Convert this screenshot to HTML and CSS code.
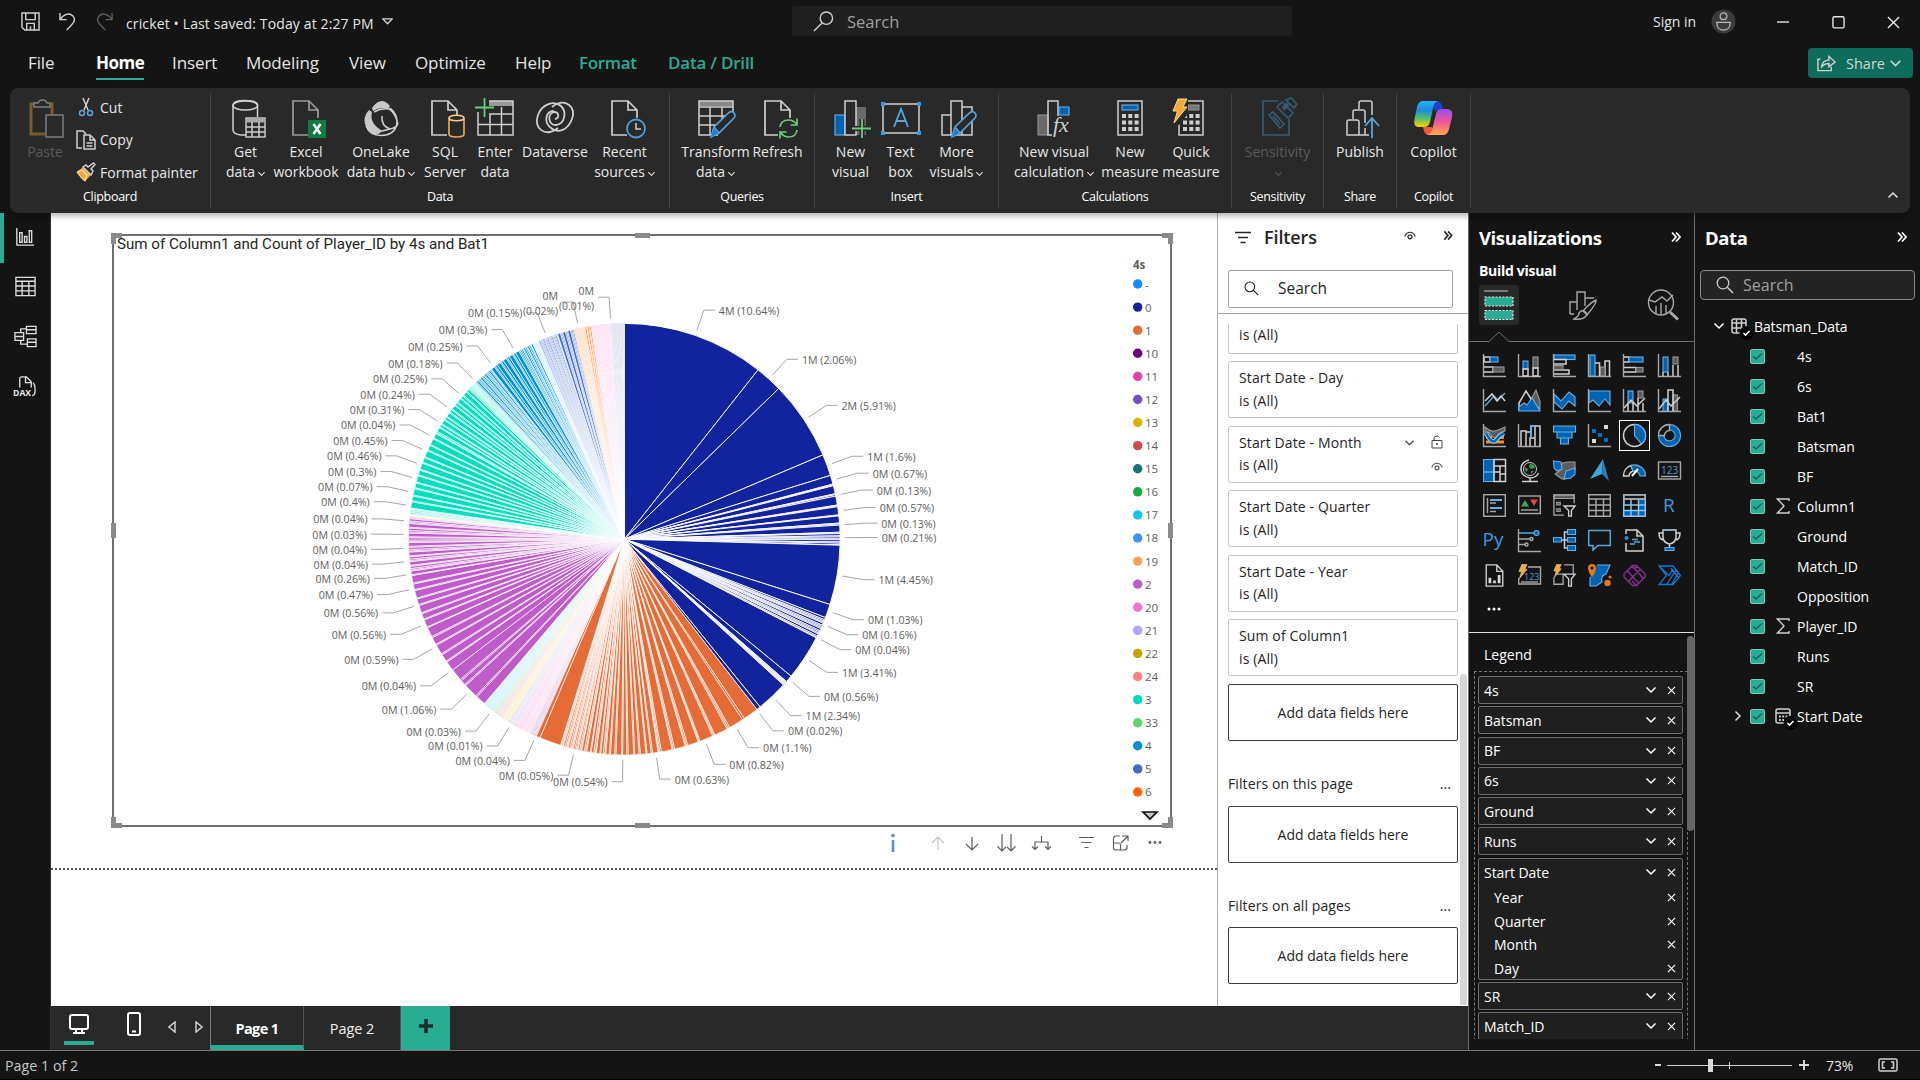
FILE: index.html
```html
<!DOCTYPE html>
<html lang="en">
<head>
<meta charset="utf-8">
<title>cricket - Power BI Desktop</title>
<link rel="stylesheet" href="styles.css">
</head>
<body>
<svg class="defs" width="0" height="0">
  <symbol id="chev" viewBox="0 0 12 8"><path d="M1.5 1.5 6 6 10.500 1.500" fill="none" stroke="currentColor" stroke-width="1.500"/></symbol>
  <symbol id="cross" viewBox="0 0 10 10"><path d="M1 1 9 9M9 1 1 9" stroke="currentColor" stroke-width="1.300"/></symbol>
  <symbol id="dbl" viewBox="0 0 10 12"><path d="M1 1.500 5 6 1 10.500M5 1.500 9 6 5 10.500" fill="none" stroke="currentColor" stroke-width="1.700"/></symbol>
  <symbol id="check" viewBox="0 0 15 15"><rect x=".5" y=".5" width="14" height="14" rx="1.500" fill="#2aac94" stroke="#7cc9bb"/><path d="M3 7.500 6 10 12 4.500" fill="none" stroke="#12594c" stroke-width="1.200"/></symbol>
  <symbol id="sigma" viewBox="0 0 14 16"><path d="M13 3V1H1.500L8 8 1.500 15H13V13" fill="none" stroke="#d0d0d0" stroke-width="1.400"/></symbol>
  <symbol id="lens" viewBox="0 0 18 18"><circle cx="7" cy="7" r="5.800" fill="none" stroke="currentColor" stroke-width="1.300"/><path d="M11.300 11.300 17 17" stroke="currentColor" stroke-width="1.500"/></symbol>
  <symbol id="eye" viewBox="0 0 12 9"><path d="M.7 5.500C2 2.300 4 1.200 6 1.200S10 2.300 11.300 5.500" fill="none" stroke="currentColor" stroke-width="1.100"/><circle cx="6" cy="5.800" r="2" fill="none" stroke="currentColor" stroke-width="1.200"/></symbol>
  <symbol id="page" viewBox="0 0 40 40"><path d="M22 37H7V3H23L32 12V20M23 3V12H32" fill="none" stroke="currentColor" stroke-width="1.700"/></symbol>
  <symbol id="pencil" viewBox="0 0 26 28"><path d="M1 27 4 17 19 2.500Q22 .5 24 3T24 8L9 23ZM4 17 9 23" fill="#292929" stroke="#58a6df" stroke-width="1.600"/><path d="M1 27 4 18 8.500 23Z" fill="#1b7fd0"/></symbol>
  <symbol id="bolt" viewBox="0 0 16 26"><path d="M6 1H15L11 9H15L2 25 5.500 13H1Z" fill="#f2a83c" stroke="#ffdc8a"/></symbol>
  <linearGradient id="cp1" x1="0" y1="0" x2="0" y2="1"><stop offset="0" stop-color="#22b3f5"/><stop offset=".35" stop-color="#1e8ae0"/><stop offset=".65" stop-color="#4cc06a"/><stop offset="1" stop-color="#fbd300"/></linearGradient>
  <linearGradient id="cp2" x1="0" y1="0" x2="0" y2="1"><stop offset="0" stop-color="#9a4df0"/><stop offset=".5" stop-color="#f0559a"/><stop offset="1" stop-color="#ffab4a"/></linearGradient>
</svg>

<header class="titlebar">
  <div class="quick">
    <svg class="q-save" viewBox="0 0 20 20"><path d="M1 1H19V19H4L1 16ZM5 1V8H15V1M6 19V12H14V19M10 15V19" class="ln"/></svg>
    <svg class="q-undo" viewBox="0 0 18 20"><path d="M1 1V8H8M1 8C5 2 11 .5 14.500 4S17 11 8 19" class="ln"/></svg>
    <svg class="q-undo dim" viewBox="0 0 18 20"><path d="M17 1V8H10M17 8C13 2 7 .5 3.500 4S1 11 10 19" class="ln"/></svg>
    <span class="doc">cricket • Last saved: Today at 2:27 PM</span>
    <svg class="q-tri" viewBox="0 0 12 7"><path d="M1 .7H11L6 6Z" class="ln"/></svg>
  </div>
  <div class="topsearch">
    <svg viewBox="0 0 22 22"><circle cx="14" cy="7.500" r="6.500" class="ln"/><path d="M9.500 12.500 1 21" class="ln"/></svg>
    <span>Search</span>
  </div>
  <div class="account">
    <span>Sign in</span>
    <svg class="avatar" viewBox="0 0 26 26"><circle cx="13" cy="13" r="12.500" fill="#3b3b3b"/><circle cx="13" cy="7.500" r="3.500" fill="none" stroke="#bbb" stroke-width="1.300"/><path d="M6 14H20C20 19 17 22 13 22S6 19 6 14Z" fill="none" stroke="#bbb" stroke-width="1.300"/></svg>
  </div>
  <div class="winbtns">
    <svg viewBox="0 0 14 14"><path d="M0 6.500H13" class="wn"/></svg>
    <svg viewBox="0 0 14 14"><rect x="1" y=".8" width="12" height="12" rx="1.500" class="wn"/></svg>
    <svg viewBox="0 0 14 14"><path d="M1 1 13 13M13 1 1 13" class="wn"/></svg>
  </div>
</header>

<nav class="menubar">
  <a class="m1">File</a><a class="m2 active">Home</a><a class="m3">Insert</a><a class="m4">Modeling</a><a class="m5">View</a><a class="m6">Optimize</a><a class="m7">Help</a><a class="m8 ctx">Format</a><a class="m9 ctx">Data / Drill</a>
  <div class="share">
    <svg class="sh" viewBox="0 0 20 18"><path d="M3.500 5H1V17H15V13M5 13C5.500 8 8 6 12.500 6V2L19 8 12.500 13V9.500C9 9.500 7 10.500 5 13Z" class="ln"/></svg>
    <span>Share</span>
    <svg class="sc"><use href="#chev"/></svg>
  </div>
</nav>

<section class="ribbon">
  <div class="group g-clip">
    <div class="tools">
      <div class="btn w-paste off"><svg class="ic" viewBox="0 0 40 40"><path d="M13 6H6V36H20M27 20V6H21" fill="none" stroke="#7b5a2c" stroke-width="3"/><path d="M9 9V5H13Q14 2 17.500 2T22 5H25V9Z" fill="#292929" stroke="#7d7d7d" stroke-width="1.500"/><rect x="21" y="17" width="17" height="22" fill="#292929" stroke="#7d7d7d" stroke-width="1.500"/></svg><span>Paste</span></div>
      <div class="stack">
        <div><svg viewBox="0 0 20 20"><path d="M7 1 12 13M13 1 8 13" class="ln"/><circle cx="6" cy="16" r="2.500" class="bl"/><circle cx="14" cy="16" r="2.500" class="bl"/></svg>Cut</div>
        <div><svg viewBox="0 0 20 20"><path d="M6 18H1V1H7L10 4M8 5H14L19 10V19H8ZM14 5V10H19M10.500 13H16.500M10.500 16H16.500" class="ln"/></svg>Copy</div>
        <div><svg viewBox="0 0 20 20"><path d="M1 10 7 5 15 13 9 19Z" fill="#f2a83c"/><path d="M1 10 6 8 11 13 9 19M1 10Q5 16 9 19" fill="none" stroke="#ffe09a" stroke-width="1.200"/><path d="M7 5 15 13 17 9 15 7 19 2.500 17.500 1 12 5 10 3Z" class="ln"/></svg>Format painter</div>
      </div>
    </div>
    <div class="gl">Clipboard</div>
  </div>
  <div class="group g-data">
    <div class="tools">
      <div class="btn w49"><svg class="ic" viewBox="0 0 40 40"><path d="M20 37H15Q7 36 7 32V7Q7 2.500 19 2.500T31.500 7V19" class="ln"/><ellipse cx="19.300" cy="7.500" rx="12.300" ry="4.500" class="ln"/><rect x="20" y="20" width="19" height="19" fill="#292929" stroke="#d0d0d0" stroke-width="1.400"/><path d="M20 22.500H39" stroke="#aaa" stroke-width="4"/><path d="M20 29H39M20 34H39M26 24V39M33 24V39" class="ln"/></svg><span>Get<br>data<i class="cv"></i></span></div>
      <div class="btn w72"><svg class="ic" viewBox="0 0 40 40"><use href="#page" color="#9b9b9b"/><rect x="22" y="22" width="18" height="18" fill="#107c41"/><path d="M27.500 26 34.500 36M34.500 26 27.500 36" stroke="#fff" stroke-width="2.400"/></svg><span>Excel<br>workbook</span></div>
      <div class="btn w78"><svg class="ic" viewBox="0 0 40 40"><path d="M11 10Q20-3 29 8L27 11Q20 8 12 13ZM8 12Q-1 22 8 33L14 37Q18 36 22 33 8 26 11 14Z" fill="#c8c8c8"/><path d="M29 10C40 18 39 37 20 37.500 12 37.500 7 33 5 28M13 14Q20 10 28 11 34 14 37 26M21 18Q20 28 29 31 36 30 37 25M21 33 29 31" class="ln"/></svg><span>OneLake<br>data hub<i class="cv"></i></span></div>
      <div class="btn w50"><svg class="ic" viewBox="0 0 40 40"><use href="#page" color="#cfcfcf"/><path d="M24 20V36Q24 39 31.500 39T39 36V20" fill="#292929" stroke="#e8a55a" stroke-width="1.700"/><ellipse cx="31.500" cy="20" rx="7.500" ry="2.800" fill="#292929" stroke="#ffc98a" stroke-width="1.500"/></svg><span>SQL<br>Server</span></div>
      <div class="btn w50"><svg class="ic" viewBox="0 0 40 40"><path d="M14 5.500H38" stroke="#999" stroke-width="5"/><path d="M3 14V37H38V3H14M3 26.500H38M14 16H38M15 16V37M26.500 9V37" class="ln"/><path d="M9.500 0V19M0 9.500H19" stroke="#6ccb7c" stroke-width="1.800"/></svg><span>Enter<br>data</span></div>
      <div class="btn w70"><svg class="ic" viewBox="0 0 40 40"><g fill="none" stroke="#cfcfcf" stroke-width="1.800"><path d="M23 30C10 40-2 30 3 17 7 6 19 2 26 8 32 14 30 26 21 27 13 27 12 16 19 14 24 14 25 20 20 21"/><path d="M17 9C30-1 42 9 37 21 33 32 23 36 16 30 8 24 11 13 19 13"/></g></svg><span>Dataverse</span></div>
      <div class="btn w69"><svg class="ic" viewBox="0 0 40 40"><use href="#page" color="#cfcfcf"/><circle cx="31" cy="30.500" r="9" fill="#292929" stroke="#4f9fdc" stroke-width="1.800"/><path d="M31 25V31H36" class="ln"/></svg><span>Recent<br>sources<i class="cv"></i></span></div>
    </div>
    <div class="gl">Data</div>
  </div>
  <div class="group g-query">
    <div class="tools">
      <div class="btn w71"><svg class="ic" viewBox="0 0 40 40"><path d="M3 5.500H37" stroke="#888" stroke-width="5"/><path d="M22 37H3V3H37V15M3 9H37M3 18H33M3 27H22M14 9V37M26 9V24" class="ln"/><use href="#pencil" x="14" y="12" width="26" height="28"/></svg><span>Transform<br>data<i class="cv"></i></span></div>
      <div class="btn w53"><svg class="ic" viewBox="0 0 40 40"><use href="#page" color="#cfcfcf"/><path d="M22 20H40V40H20V22Z" fill="#292929"/><path d="M22 29Q23 22 30.500 22 35 22 38.500 26M39 20.500V27H32.500M39 32Q38 39 30.500 39 26 39 23 35M22 40.500V34H28.500" fill="none" stroke="#6ccb7c" stroke-width="1.700"/></svg><span>Refresh</span></div>
    </div>
    <div class="gl">Queries</div>
  </div>
  <div class="group g-ins">
    <div class="tools">
      <div class="btn w53"><svg class="ic" viewBox="0 0 40 40"><rect x="4" y="17" width="10" height="20" class="fb"/><rect x="25" y="9" width="10" height="28" fill="#6a6a6a"/><rect x="14" y="3" width="11" height="34" fill="#292929" class="ln"/><path d="M31 21V40M21 30.500H40" stroke="#292929" stroke-width="5"/><path d="M31 21V40M21 30.500H40" stroke="#6ccb7c" stroke-width="1.800"/></svg><span>New<br>visual</span></div>
      <div class="btn w47"><svg class="ic" viewBox="0 0 40 40"><rect x="2" y="6" width="36" height="29" class="ln"/><path d="M0 4H4V8H0ZM36 4H40V8H36ZM0 33H4V37H0ZM36 33H40V37H36Z" fill="#3b9ae1"/><path d="M13 29 20 11 27 29M15.500 23H24.500" fill="none" stroke="#58a6df" stroke-width="1.800"/></svg><span>Text<br>box</span></div>
      <div class="btn w65"><svg class="ic" viewBox="0 0 40 40"><path d="M5 17H14V37H5ZM14 37V3H25V37ZM25 9H35V37H25" class="ln"/><use href="#pencil" x="14" y="12" width="26" height="28"/></svg><span>More<br>visuals<i class="cv"></i></span></div>
    </div>
    <div class="gl">Insert</div>
  </div>
  <div class="group g-calc">
    <div class="tools">
      <div class="btn w90"><svg class="ic" viewBox="0 0 40 40"><rect x="4" y="17" width="10" height="20" fill="#6a6a6a" stroke="#999"/><path d="M24 18V3H14V37H18" class="ln"/><path d="M25 9H35V17H25Z" class="fb"/><text x="19" y="34" class="fx">fx</text></svg><span>New visual<br>calculation<i class="cv"></i></span></div>
      <div class="btn w62"><svg class="ic" viewBox="0 0 40 40"><rect x="8" y="3" width="24" height="34" class="ln"/><rect x="12" y="7" width="16" height="5" class="fb"/><path d="M12 18H29M12 24.500H29M12 31H29" stroke="#cfcfcf" stroke-width="4" stroke-dasharray="4 2.300"/></svg><span>New<br>measure</span></div>
      <div class="btn w60"><svg class="ic" viewBox="0 0 40 40"><rect x="8" y="3" width="24" height="34" class="ln"/><rect x="17" y="7" width="11" height="5" fill="#777" stroke="#999"/><path d="M12 18H29M12 24.500H29M12 31H29" stroke="#cfcfcf" stroke-width="4" stroke-dasharray="4 2.300"/><path d="M4 0H17V16L8 27H3Z" fill="#292929"/><use href="#bolt" x="1" y="0" width="16" height="26"/></svg><span>Quick<br>measure</span></div>
    </div>
    <div class="gl">Calculations</div>
  </div>
  <div class="group g-sens">
    <div class="tools">
      <div class="btn off"><svg class="ic" viewBox="0 0 40 40"><g fill="none" stroke="#355a74" stroke-width="1.700"><path d="M21 3H6V37H32V21M12 17 16 14 27 26 23 30ZM16 18 23 26"/><path d="M20 9 25 4 36 15 31 20ZM29 2 34 0 40 6 37 10Z"/><path d="M26 11 31 6" stroke-width="4"/></g></svg><span>Sensitivity<br><i class="cv"></i></span></div>
    </div>
    <div class="gl">Sensitivity</div>
  </div>
  <div class="group g-pub">
    <div class="tools">
      <div class="btn"><svg class="ic" viewBox="0 0 40 40"><path d="M7 37V23Q7 22 9 22H17Q19 22 19 24V37ZM13 21V14Q13 12 15 12H23Q25 12 25 14V25M19 11V5Q19 3 21 3H30Q32 3 32 5V17M17 37H29M25 30V37" class="ln"/><path d="M32 40V20M25 28 32 20 39 28" fill="none" stroke="#58a6df" stroke-width="1.800"/></svg><span>Publish</span></div>
    </div>
    <div class="gl">Share</div>
  </div>
  <div class="group g-cop">
    <div class="tools">
      <div class="btn"><svg class="ic" viewBox="0 0 40 40"><path d="M18 3H25Q29 4 30 12L22 13Z" fill="#1a45c8"/><path d="M9 3H25Q21 4 20 10L17 24Q16 29 11 29H5Q0 28 1.500 21L4 9Q5 4 9 3Z" fill="url(#cp1)"/><path d="M10 29H19L21 37H15Q11 36 10 29Z" fill="#ee5a3c"/><path d="M31 37H14Q18 36 19.500 30L23 16Q24 11 29 11H35Q40.500 12 39 19L36 31Q35 36 31 37Z" fill="url(#cp2)"/></svg><span>Copilot</span></div>
    </div>
    <div class="gl">Copilot</div>
  </div>
  <svg class="collapse"><use href="#chev"/></svg>
</section>

<main class="body">
  <aside class="rail">
    <div class="sel"><svg viewBox="0 0 24 24"><path d="M4 3V21H22" class="wl"/><path d="M7 8H9.500V18H7ZM12 12H14.500V18H12ZM17 6H19.500V18H17Z" class="wl"/></svg></div>
    <div><svg viewBox="0 0 24 24"><path d="M2 2.500H22V21.500H2ZM2 6.500H22M2 11.500H22M2 16.500H22M8.500 6V21M15.500 6V21" class="wl"/></svg></div>
    <div><svg viewBox="0 0 24 24"><path d="M13 1.500H23V9H13ZM13 5H23M1 8H10V16H1ZM1 12H10M14 14.500H23V22.500H14ZM14 18H23M7 8V4H13M7 16V20H14" class="wl"/></svg></div>
    <div><svg viewBox="0 0 24 24"><path d="M6 13V4Q6 2 8 2H13L18 7V13M12 2V8H18M20 8Q23 12 21.500 20L19 22" class="wl"/><text x="-1" y="22" class="dax">DAX</text></svg></div>
  </aside>

  <div class="center">
    <div class="work">
      <section class="canvas">
        <div class="visual">
          <svg id="pie" viewBox="0 0 1058 591" width="1058" height="591">
            <text x="4" y="13.500" class="vtitle" textLength="372" lengthAdjust="spacingAndGlyphs">Sum of Column1 and Count of Player_ID by 4s and Bat1</text>
            <g id="slices"></g><g id="labels"></g><g id="legend"></g>
            <path d="M1030 577H1044L1037 584Z" fill="#c8c8c8" stroke="#111" stroke-width="1.700"/>
          </svg>
          <b class="h tl"></b><b class="h tr"></b><b class="h bl2"></b><b class="h br"></b>
          <b class="h tc"></b><b class="h bc"></b><b class="h ml"></b><b class="h mr"></b>
        </div>
        <div class="vtools">
          <svg viewBox="0 0 290 24"><g fill="none" stroke="#605e5c" stroke-width="1.200">
            <path d="M12 9V21" stroke="#5c8fc7" stroke-width="2.600"/><circle cx="12" cy="4.500" r="1.200" fill="#5c8fc7" stroke="#5c8fc7"/>
            <path d="M57 19V6M51 12 57 6 63 12" stroke="#c8c6c4"/>
            <path d="M91 6V19M85 13 91 19 97 13"/>
            <path d="M121 3V20M116.500 15.500 121 20 125 16M130 3V20M126 16 130 20 134.500 15.500"/>
            <path d="M160.500 5V11M154 18V11H167V18M151 15.500 154 18.500 157 15.500M164 15.500 167 18.500 170 15.500"/>
            <path d="M198 6.500H213M200.500 11.500H210.500M203.500 16.500H207.500"/>
            <path d="M239 5H235Q232.500 5 232.500 7.500V17Q232.500 19 235 19H243Q246 19 246 17V14M232.500 12H238Q239.500 12 239.500 14V19M240 12 246.500 5.500M241 5H247V10"/>
            <g fill="#605e5c" stroke="none"><circle cx="269" cy="11.500" r="1.400"/><circle cx="274" cy="11.500" r="1.400"/><circle cx="279" cy="11.500" r="1.400"/></g></g></svg>
        </div>
        <div class="pagebreak"></div>
      </section>

      <section class="filters">
        <div class="fhead">
          <svg class="fi" viewBox="0 0 16 13"><path d="M0 1.500H16M3 6.500H13M5.500 11.500H10.500" stroke="#252423" stroke-width="1.600"/></svg>
          <h2>Filters</h2>
          <svg class="ey"><use href="#eye"/></svg><svg class="dc"><use href="#dbl"/></svg>
        </div>
        <div class="fsearch"><svg><use href="#lens"/></svg>Search</div>
        <div class="flist">
          <div class="fcard cut"><p>is (All)</p></div>
          <div class="fcard"><p>Start Date - Day</p><p>is (All)</p></div>
          <div class="fcard hov"><p>Start Date - Month</p><p>is (All)</p>
            <svg class="c1"><use href="#chev"/></svg>
            <svg class="c2" viewBox="0 0 12 14"><path d="M1 5.500H11V13H1ZM3 5.500V3.500Q3 1 6 1 8 1 8.500 2.500" fill="none" stroke="#444"/><circle cx="6" cy="9" r="1" fill="#444"/></svg>
            <svg class="c3"><use href="#eye"/></svg></div>
          <div class="fcard"><p>Start Date - Quarter</p><p>is (All)</p></div>
          <div class="fcard"><p>Start Date - Year</p><p>is (All)</p></div>
          <div class="fcard"><p>Sum of Column1</p><p>is (All)</p></div>
          <div class="drop">Add data fields here</div>
          <div class="flabel"><span>Filters on this page</span><span>...</span></div>
          <div class="drop">Add data fields here</div>
          <div class="flabel"><span>Filters on all pages</span><span>...</span></div>
          <div class="drop">Add data fields here</div>
          <i class="fscroll"></i>
        </div>
      </section>
    </div>

    <footer class="tabs">
      <div class="views">
        <div class="dv on"><svg viewBox="0 0 20 20"><rect x="1" y="1" width="18" height="14" rx="2" class="wn2"/><path d="M7 15V18.500M13 15V18.500M4 19H16" class="wn2"/></svg></div>
        <svg class="ph" viewBox="0 0 14 24"><rect x="1" y="1" width="12" height="22" rx="2" class="wn2"/><path d="M5 19.500H9" class="wn2"/></svg>
        <svg class="ar" viewBox="0 0 8 12"><path d="M7 1V11L1 6Z" class="ln"/></svg>
        <svg class="ar r" viewBox="0 0 8 12"><path d="M1 1V11L7 6Z" class="ln"/></svg>
      </div>
      <div class="tab cur">Page 1</div><div class="tab">Page 2</div>
      <div class="add"><svg viewBox="0 0 14 14"><path d="M7 0V14M0 7H14" stroke="#1d2f2c" stroke-width="3.600"/></svg></div>
    </footer>
  </div>

  <section class="viz">
    <div class="vhead"><h2>Visualizations</h2><svg><use href="#dbl"/></svg></div>
    <h3>Build visual</h3>
    <div class="vtabs">
      <div class="vt on"><svg viewBox="0 0 40 40"><path d="M5 6H29" stroke="#ccc"/><g fill="#2aac94" stroke="#e8e8e8" stroke-dasharray="2 1.500" stroke-width="1.200"><rect x="6" y="12" width="28" height="9"/><rect x="6" y="25.500" width="28" height="9"/></g></svg></div>
      <div class="vt"><svg viewBox="0 0 40 40"><path d="M7 29V17H14V7H22V13H31M14 17V25M22 13V21M7 29H11" class="gr"/><path d="M33 15Q34 18 24 30L20 26Q28 17 33 15ZM20 26Q25 27 23 31 20 35 11 34 16 31 16 28 18 25 20 26Z" class="gr"/></svg></div>
      <div class="vt"><svg viewBox="0 0 40 40"><circle cx="18" cy="17.500" r="12.500" class="gr"/><path d="M6 15 12 17 19 12 24 16 30 10" class="gr"/><path d="M13 28V21M18 29V18M23 28V20" class="gr" stroke-width="2"/><path d="M27 27 35 34.500" stroke="#aaa" stroke-width="3"/></svg></div>
    </div>
    <div class="vline"><svg viewBox="0 0 226 11"><path d="M0 10.500H21L31 1 41 10.500H226" fill="none" stroke="#6e6e6e"/></svg></div>
    <div class="vgrid">
      <svg viewBox="0 0 23 23"><path d="M.5 0V22.500H23" class="gr"/><rect x="1" y="3" width="6" height="5" class="ln"/><rect x="7" y="3" width="8" height="5" class="fb"/><path d="M1 13H10V18H1" class="ln"/><rect x="10" y="13" width="11" height="5" class="fg"/></svg>
      <svg viewBox="0 0 23 23"><path d="M.5 0V22.500H23" class="gr"/><rect x="5" y="7" width="5" height="8" class="fb"/><rect x="5" y="15" width="5" height="7" class="ln"/><rect x="15" y="3" width="5" height="11" class="fg"/><rect x="15" y="14" width="5" height="8" class="ln"/></svg>
      <svg viewBox="0 0 23 23"><path d="M.5 0V22.500H23" class="gr"/><rect x="1" y="1" width="21" height="4.500" class="fb"/><path d="M1 5.500H13V10H1M1 16H16V20H1" class="ln"/><rect x="1" y="11.500" width="9" height="4" class="fg"/></svg>
      <svg viewBox="0 0 23 23"><path d="M.5 0V22.500H23" class="gr"/><rect x="2" y="1" width="5" height="21" class="fb"/><path d="M7 9H11.500V22M17 22V7H21.500V22" class="ln"/><rect x="12.500" y="13" width="4.500" height="9" class="fg"/></svg>
      <svg viewBox="0 0 23 23"><path d="M.5 0V22.500H23" class="gr"/><path d="M1 3H6V8H1M1 13.500H13V18H1" class="ln"/><rect x="6" y="3" width="14" height="5" class="fb"/><rect x="13" y="13.500" width="7" height="4.500" class="fg"/></svg>
      <svg viewBox="0 0 23 23"><path d="M.5 0V22.500H23" class="gr"/><rect x="5" y="3" width="5" height="15" class="fb"/><path d="M5 18V22M10 18V22M15 11V22M20 11V22" class="ln"/><rect x="15" y="3" width="5" height="7" class="fg"/></svg>

      <svg viewBox="0 0 23 23"><path d="M.5 0V22.500H23" class="gr"/><path d="M2 17 11 7 15 11 22 4" class="bl"/><path d="M2 12 9 5 14 12 18 7 22 12" class="ln"/></svg>
      <svg viewBox="0 0 23 23"><path d="M12 12 18 1 22 12V20Z" class="fg"/><path d="M1 22V14L8 2 15 13" class="ln"/><path d="M1 22V18L6 14 9 16 14 9 22 22Z" class="fb"/></svg>
      <svg viewBox="0 0 23 23"><path d="M1 5 8 12 16 3 22 8V17L16 12 9 20 1 13Z" class="fb"/><path d="M.5 0V22.500H23" class="gr"/></svg>
      <svg viewBox="0 0 23 23"><path d="M1 2H22V16L17 10 11 17 5 11 1 14Z" class="fb"/><path d="M.5 0V22.500H23" class="gr"/></svg>
      <svg viewBox="0 0 23 23"><path d="M.5 0V22.500H23" class="gr"/><rect x="5" y="2" width="5" height="12" class="fb"/><rect x="15" y="2" width="5" height="7" class="fg"/><path d="M5 14V22M10 14V22M15 9V22M20 14V22M1 19 8 11 14 17 22 9" class="ln"/></svg>
      <svg viewBox="0 0 23 23"><path d="M.5 0V22.500H23" class="gr"/><rect x="5" y="10" width="5" height="12" class="fb"/><rect x="15" y="6" width="4.500" height="16" class="fg"/><path d="M10 22V1H15V22M1 20 8 11 13 17 22 8" class="ln"/></svg>

      <svg viewBox="0 0 23 23"><path d="M3 13.500H9M15 13.500H21M3 18H21" stroke="#f0912c" stroke-width="3"/><path d="M2 3Q8 8 12 7T22 3V7Q17 8 14 12T8 11 2 9Z" class="fg"/><path d="M3 9Q9 21 13 16T21 9" stroke="#8cc4ee" stroke-width="4.500" fill="none"/><path d="M3 9Q9 21 13 16T21 9" stroke="#0063b1" stroke-width="2.200" fill="none"/><path d="M.5 0V22.500H23" class="gr"/></svg>
      <svg viewBox="0 0 23 23"><path d="M.5 0V22.500H23" class="gr"/><path d="M3 22V7H8V22M8 8H13V14M17 22V2H22V22M12 22V14H17" class="ln"/><path d="M13 14V2H17" fill="none" stroke="#69afe5" stroke-width="2"/></svg>
      <svg viewBox="0 0 23 23"><path d="M.5 2H22.500V8H.5ZM4 8H19V14H4ZM7.500 14H15.500V20H7.500Z" class="fb"/></svg>
      <svg viewBox="0 0 23 23"><path d="M.5 0V22.500H23" class="gr"/><path d="M4 5H8V9H4ZM10 9H14V13H10ZM16 14H20V18H16Z" fill="#0a6fc4"/><path d="M16 1H20V5H16ZM4 15H8V19H4Z" fill="#d8d8d8"/></svg>
      <svg class="picked" viewBox="0 0 23 23"><circle cx="11.500" cy="11.500" r="11" class="ln"/><path d="M11.500.5A11 11 0 0 1 18.500 20L11.500 11.500Z" class="fb"/></svg>
      <svg viewBox="0 0 23 23"><circle cx="11.500" cy="11.500" r="8.300" fill="none" stroke="#69afe5" stroke-width="6.500"/><circle cx="11.500" cy="11.500" r="8.300" fill="none" stroke="#0063b1" stroke-width="4.500"/><path d="M11.500.5V6.500A5 5 0 0 0 6.500 11.500H.5A11 11 0 0 1 11.500.5Z" fill="#141414" class="gr"/></svg>

      <svg viewBox="0 0 23 23"><path d="M.5.5H11V22.500H.5Z" class="fb"/><path d="M.5 13H11" class="bl"/><path d="M11 .5H22.500V22.500H11ZM11 7H22.500M17 7V22M11 13H17M17 15H22" class="ln"/></svg>
      <svg viewBox="0 0 23 23"><circle cx="12" cy="10" r="6.500" fill="#141414" stroke="#d0d0d0"/><path d="M12 4.500 16 6 17 9 13 10 11 8ZM7 8 10 10 9 13 7 11ZM13 12 16 12 13 15Z" fill="#2fa04a"/><path d="M11 1Q3 3 3 10T12 19Q18 19 20.500 14M12 19V22M4 22.500H20" class="ln"/></svg>
      <svg viewBox="0 0 23 23"><path d="M9 4 15 3H22V11L12 20 9 20 2 15 8 11Z" class="fg"/><path d="M.5 2 8 3 9 10 4 12 1 9Z" class="fb"/><path d="M13 12 22 9V15L18 19 11 20Z" class="fb"/></svg>
      <svg viewBox="0 0 23 23"><path d="M15 0 2 20 14 15Z" fill="#3fa3d6"/><path d="M15 0 14 15 21 22Z" fill="#2a7fb8"/></svg>
      <svg viewBox="0 0 23 23"><path d="M.5 17A11 11 0 0 1 8 6.500L10 12A6 6 0 0 0 6 17Z" class="ln"/><path d="M8 6.500A11 11 0 0 1 22.500 17H17A6 6 0 0 0 10 12Z" class="fb"/><path d="M9 17 15 10" stroke="#fff" stroke-width="2"/></svg>
      <svg viewBox="0 0 23 23"><rect x=".5" y="3" width="22" height="17" class="gr"/><path d="M3 17.500H20" class="gr"/><text x="3" y="14.500" class="n123">123</text></svg>

      <svg viewBox="0 0 23 23"><rect x=".7" y=".7" width="21.600" height="21.600" class="gr"/><path d="M4.500 4V19M7 9H13M7 17.500H13" class="gr"/><path d="M7 6H19M7 14H19" stroke="#69afe5" stroke-width="2"/></svg>
      <svg viewBox="0 0 23 23"><rect x=".7" y="2" width="21.600" height="17.500" class="gr"/><path d="M3 12.500 7 6 11 12.500Z" fill="#3fa552"/><path d="M12 5.500H20L16 12Z" fill="#e04444"/><path d="M3 16H20" class="gr"/></svg>
      <svg viewBox="0 0 25 25"><path d="M1 1H23V5H1Z" class="fg"/><path d="M12 23H1V1H23V10" class="gr"/><path d="M4 9H8V12H4ZM4 16H8V19H4Z" class="fg"/><path d="M12 13H24L20 18V24H17V18Z" class="ln"/></svg>
      <svg viewBox="0 0 23 23"><path d="M.7.7H22.300V22.300H.7ZM.7 5H22.300M.7 11H22.300M.7 16.500H22.300M8 5V22M15.500 5V22" class="gr"/></svg>
      <svg viewBox="0 0 23 23"><path d="M15.500 5H22V22H1V16.500H15.500Z" fill="#0063b1"/><path d="M.7.7H22.300V22.300H.7ZM.7 5H22.300M.7 11H22.300M.7 16.500H22.300M8 5V22M15.500 5V22" class="lb"/><path d="M1 11V1H22V5H1" class="gr"/></svg>
      <svg viewBox="0 0 23 23"><text x="5" y="18" class="big">R</text></svg>

      <svg viewBox="0 0 23 23"><text x="-.5" y="17" class="big">Py</text></svg>
      <svg viewBox="0 0 23 23"><path d="M.5 0V22.500H23M1 10H12M1 15.500H8" class="gr"/><path d="M1 4H16" class="bl"/><circle cx="18.500" cy="4" r="2.500" class="fb"/><circle cx="13.500" cy="10" r="1.500" class="gr"/><circle cx="8.500" cy="15.500" r="1.500" class="gr"/></svg>
      <svg viewBox="0 0 23 23"><path d="M9 11H15M15 3H11.500V19H15" class="ln"/><path d="M.5 8.500H8.500V13H.5ZM14.500.5H22.500V5.500H14.500ZM14.500 8.500H22.500V13H14.500ZM14.500 16.500H22.500V21.500H14.500Z" class="fb"/></svg>
      <svg viewBox="0 0 23 23"><path d="M.7 1.500H22.300V16.500H10L5 21V16.500H.7Z" class="bl"/></svg>
      <svg viewBox="0 0 23 23"><path d="M3 5V1H14L20 7V22H3V14M14 1V7H20" class="ln"/><circle cx="3.500" cy="9" r="2" fill="#2d8fd8"/><path d="M9 10.500H15M7 15H12M11 13H17" class="bl"/></svg>
      <svg viewBox="0 0 23 23"><path d="M5 1H18V9Q17 14 11.500 15 6 14 5 9ZM5 4H1Q1 11 6 11M18 4H22Q22 11 17 11M11.500 15V19" class="ln"/><path d="M5 1.500H18M7 18.500H16V21.500H7Z" class="fb"/></svg>

      <svg viewBox="0 0 23 25"><path d="M2.500 1H14L20.500 8V24H2.500ZM14 1V8H20.500" class="ln" stroke-width="2"/><path d="M5 21V15H8V21ZM10 21V18H13V21ZM15 21V12H18V21Z" fill="#d8d8d8"/></svg>
      <svg viewBox="0 0 23 23"><path d="M10 3H22.500V20H.7V14" class="gr"/><path d="M3 18H20" class="gr"/><text x="6" y="15.500" class="n123 s">123</text><use href="#bolt" x="0" y="0" width="10" height="15"/></svg>
      <svg viewBox="0 0 25 25"><path d="M12 1H22V11M1 14V22H11V11H3" class="gr"/><path d="M12 11H24L20 16V24H17V16Z" class="ln"/><use href="#bolt" x="0" y="0" width="10" height="15"/></svg>
      <svg viewBox="0 0 23 23"><path d="M9 1H22L18 10Q12 12 14 18L8 22H2V13" class="fb"/><path d="M4 0Q8 0 8 4 8 8 4 13 0 8 0 4 0 0 4 0Z" fill="#e07a12"/><circle cx="4" cy="4" r="1.500" fill="#141414"/><circle cx="19.500" cy="19" r="3.200" fill="#e07a12"/><circle cx="22" cy="13" r="1.500" fill="#e07a12"/></svg>
      <svg viewBox="0 0 23 23"><path d="M9.500 1.500H13.500L22 10V13L13.500 21.500H9.500L1 13V10ZM9 2 20 14M14 2 11.500 5M4.500 7 15 18.500M11.500 11 6 17M11.500 11 17 6M13 21 9 17" fill="none" stroke="#8a2f96" stroke-width="1.400"/></svg>
      <svg viewBox="0 0 23 23"><path d="M1 2H15L22.500 11.500 15 20.500H1L8.500 11.500ZM1 2 11 11.500 15 5M18 6 9 20M13 4 20 13M20 9 14 20" fill="none" stroke="#1677d2" stroke-width="1.300"/></svg>
      <svg viewBox="0 0 23 23"><g fill="#fff"><circle cx="6" cy="10" r="1.500"/><circle cx="11" cy="10" r="1.500"/><circle cx="16" cy="10" r="1.500"/></g></svg>
    </div>
    <div class="wells">
      <div class="wname">Legend</div>
      <div class="well">
        <div class="pill"><span>4s</span><svg class="c"><use href="#chev"/></svg><svg class="x"><use href="#cross"/></svg></div>
        <div class="pill"><span>Batsman</span><svg class="c"><use href="#chev"/></svg><svg class="x"><use href="#cross"/></svg></div>
        <div class="pill"><span>BF</span><svg class="c"><use href="#chev"/></svg><svg class="x"><use href="#cross"/></svg></div>
        <div class="pill"><span>6s</span><svg class="c"><use href="#chev"/></svg><svg class="x"><use href="#cross"/></svg></div>
        <div class="pill"><span>Ground</span><svg class="c"><use href="#chev"/></svg><svg class="x"><use href="#cross"/></svg></div>
        <div class="pill"><span>Runs</span><svg class="c"><use href="#chev"/></svg><svg class="x"><use href="#cross"/></svg></div>
        <div class="multi">
          <div class="pill"><span>Start Date</span><svg class="c"><use href="#chev"/></svg><svg class="x"><use href="#cross"/></svg></div>
          <div class="sub"><span>Year</span><svg class="x"><use href="#cross"/></svg></div>
          <div class="sub"><span>Quarter</span><svg class="x"><use href="#cross"/></svg></div>
          <div class="sub"><span>Month</span><svg class="x"><use href="#cross"/></svg></div>
          <div class="sub"><span>Day</span><svg class="x"><use href="#cross"/></svg></div>
        </div>
        <div class="pill"><span>SR</span><svg class="c"><use href="#chev"/></svg><svg class="x"><use href="#cross"/></svg></div>
        <div class="pill"><span>Match_ID</span><svg class="c"><use href="#chev"/></svg><svg class="x"><use href="#cross"/></svg></div>
      </div>
      <i class="vscroll"></i>
    </div>
  </section>

  <section class="data">
    <div class="vhead"><h2>Data</h2><svg><use href="#dbl"/></svg></div>
    <div class="dsearch"><svg><use href="#lens"/></svg>Search</div>
    <div class="table"><svg class="c"><use href="#chev"/></svg>
      <svg class="t" viewBox="0 0 24 24"><path d="M4 2H14Q16 2 16 4V14Q16 16 14 16H4Q2 16 2 14V4Q2 2 4 2ZM2 6H16M2 11H16M6.500 2V16M11.500 2V16" class="ln"/><circle cx="16.500" cy="16" r="7" fill="#000"/><path d="M13.500 16 15.500 18 19.500 14" fill="none" stroke="#fff" stroke-width="1.600"/></svg>
      <span>Batsman_Data</span></div>
    <div class="row"><svg class="k"><use href="#check"/></svg><i></i><span>4s</span></div>
    <div class="row"><svg class="k"><use href="#check"/></svg><i></i><span>6s</span></div>
    <div class="row"><svg class="k"><use href="#check"/></svg><i></i><span>Bat1</span></div>
    <div class="row"><svg class="k"><use href="#check"/></svg><i></i><span>Batsman</span></div>
    <div class="row"><svg class="k"><use href="#check"/></svg><i></i><span>BF</span></div>
    <div class="row"><svg class="k"><use href="#check"/></svg><i><svg class="s"><use href="#sigma"/></svg></i><span>Column1</span></div>
    <div class="row"><svg class="k"><use href="#check"/></svg><i></i><span>Ground</span></div>
    <div class="row"><svg class="k"><use href="#check"/></svg><i></i><span>Match_ID</span></div>
    <div class="row"><svg class="k"><use href="#check"/></svg><i></i><span>Opposition</span></div>
    <div class="row"><svg class="k"><use href="#check"/></svg><i><svg class="s"><use href="#sigma"/></svg></i><span>Player_ID</span></div>
    <div class="row"><svg class="k"><use href="#check"/></svg><i></i><span>Runs</span></div>
    <div class="row"><svg class="k"><use href="#check"/></svg><i></i><span>SR</span></div>
    <div class="row exp"><svg class="e" viewBox="0 0 8 12"><path d="M1.500 1.500 6 6 1.500 10.500" fill="none" stroke="#ddd" stroke-width="1.500"/></svg><svg class="k"><use href="#check"/></svg><i><svg class="t" viewBox="0 0 24 24"><path d="M4 2H14Q16 2 16 4V14Q16 16 14 16H4Q2 16 2 14V4Q2 2 4 2ZM2 6H16" class="ln"/><path d="M5 9.500H14M5 13H11" stroke="#ccc" stroke-width="1.800" stroke-dasharray="1.800 1.500"/><circle cx="16.500" cy="16" r="7" fill="#000"/><path d="M13.500 16 15.500 18 19.500 14" fill="none" stroke="#fff" stroke-width="1.600"/></svg></i><span>Start Date</span></div>
  </section>
</main>

<footer class="status">
  <span class="pg">Page 1 of 2</span>
  <svg viewBox="0 0 160 16"><path d="M1 8H7M145 8H155M150 3V13" stroke="#ddd" stroke-width="1.900"/><path d="M13 8.500H138M75.500 5V12" stroke="#d0d0d0"/><path d="M54 2H59V15H54Z" fill="#d8d8d8"/></svg>
  <span class="pc">73%</span>
  <svg class="fit" viewBox="0 0 20 14"><rect x="1" y="1" width="18" height="12" rx="1.500" class="ln"/><path d="M7 4 4.500 4V10H7M13 4H15.500V10H13" class="ln"/></svg>
</footer>
<script src="chart.js"></script>
</body>
</html>
```
FILE: styles.css
```css
* { box-sizing: border-box; }
body { margin: 0; width: 1920px; height: 1080px; overflow: hidden; background: #141414; color: #e4e4e4; font: 14px "Open Sans", "Noto Sans", sans-serif; display: flex; flex-direction: column; }
h2, h3, p { margin: 0; }
svg { display: block; flex: none; }
.defs { position: absolute; }
i { font-style: normal; }
span { white-space: nowrap; }

.ln { fill: none; stroke: #cfcfcf; stroke-width: 1.5; }
rect.ln[fill], path.ln[fill="#141414"] { fill: #292929; }
.gr { fill: none; stroke: #a8a8a8; stroke-width: 1.4; }
path.gr[fill] { fill: #141414; }
.bl, .lb { fill: none; stroke: #58a6df; stroke-width: 1.5; }
.lb { stroke: #8fc3ea; }
.fb { fill: #0063b1; stroke: #69afe5; stroke-width: 1.1; }
.fg { fill: #5c5c5c; stroke: #9a9a9a; stroke-width: 1.1; }
.wn { fill: none; stroke: #e6e6e6; stroke-width: 1.5; }
.wn2 { fill: none; stroke: #fff; stroke-width: 2; }
.wl { fill: none; stroke: #dedede; stroke-width: 1.4; }

/* title bar */
.titlebar { height: 42px; flex: none; display: flex; align-items: flex-start; }
.quick { width: 792px; display: flex; padding: 12px 0 0 21px; }
.q-save { width: 19px; height: 19px; margin-right: 19px; }
.q-undo { width: 17px; height: 19px; margin-right: 20px; }
.q-undo.dim { opacity: .4; margin-right: 13px; }
.doc { font-size: 14px; line-height: 20px; margin: 2px 8px 0 0; width: 248px; letter-spacing: .13px; }
.q-tri { width: 11px; height: 7px; margin-top: 6px; }
.topsearch { width: 500px; height: 30px; margin-top: 6px; background: #1f1f1f; border-radius: 3px; display: flex; align-items: center; padding-left: 21px; gap: 13px; font-size: 16.500px; color: #a0a0a0; }
.topsearch svg { width: 21px; height: 21px; }
.account { display: flex; align-items: center; gap: 13px; margin: 9px 0 0 361px; font-size: 14px; }
.account > span { width: 45px; }
.avatar { width: 25px; height: 25px; }
.winbtns { display: flex; gap: 42px; margin: 16px 0 0 41px; }
.winbtns svg { width: 13px; height: 13px; }

/* menu */
.menubar { height: 46px; flex: none; display: flex; padding-left: 28px; font-size: 17px; }
.menubar a { position: relative; line-height: 41px; white-space: nowrap; letter-spacing: -.1px; }
.m1 { width: 68px; } .m2 { width: 76px; } .m3 { width: 74px; } .m4 { width: 103px; } .m5 { width: 66px; } .m6 { width: 100px; } .m7 { width: 64px; } .m8 { width: 89px; } .m9 { width: 86px; }
.menubar .active { font-weight: 700; color: #fff; letter-spacing: -.5px; }
.active::after { content: ""; position: absolute; left: 0; top: 36px; width: 48px; height: 2px; background: #2aac94; }
.menubar .ctx { color: #2aac94; font-weight: 600; letter-spacing: -.3px; }
.menubar .m9 { letter-spacing: -.2px; }
.share { width: 105px; height: 30px; margin: 6px 0 0 1054px; background: #0f6b5a; border-radius: 4px; display: flex; align-items: center; padding-left: 9px; font-size: 14.500px; color: #c9dad6; }
.share .sh { width: 19px; height: 18px; margin-right: 10px; }
.share .sc { width: 13px; height: 9px; margin-left: 4px; }

/* ribbon */
.ribbon { height: 125px; flex: none; margin: 0 10px; background: #292929; border-radius: 8px; display: flex; position: relative; z-index: 2; padding-top: 5px; box-shadow: 0 3px 6px rgba(0,0,0,.3); }
.group { height: 115px; border-right: 1px solid #444; position: relative; }
.tools { height: 93px; display: flex; padding-top: 5px; }
.gl { text-align: center; font-size: 12.5px; line-height: 22px; letter-spacing: -.3px; color: #fff; }
.btn { text-align: center; line-height: 20px; font-size: 14px; letter-spacing: 0; color: #e8e8e8; display: flex; flex-direction: column; align-items: center; }
.btn .ic { width: 40px; height: 40px; margin-bottom: 3.500px; overflow: visible; }
.off { color: #5c5c5c; }
.cv { display: inline-block; width: 5px; height: 5px; border: solid currentColor; border-width: 0 1.5px 1.5px 0; transform: rotate(45deg); margin: 0 1px 2px 4px; }
.w47 { width: 47px; } .w49 { width: 49px; } .w50 { width: 50px; } .w53 { width: 53px; } .w60 { width: 60px; } .w62 { width: 62px; } .w65 { width: 65px; } .w69 { width: 69px; } .w70 { width: 70px; } .w71 { width: 71px; } .w72 { width: 72px; } .w78 { width: 78px; } .w90 { width: 90px; }
.g-clip { width: 201px; } .g-data { width: 459px; } .g-query { width: 145px; } .g-ins { width: 184px; } .g-calc { width: 233px; } .g-sens { width: 92px; } .g-pub { width: 73px; } .g-cop { width: 74px; }
.g-data .tools, .g-query .tools, .g-calc .tools { padding-left: 10px; }
.g-ins .tools { padding-left: 9px; }
.g-sens .tools, .g-pub .tools, .g-cop .tools { justify-content: center; }
.w-paste { width: 40px; margin-left: 15px; }
.stack { margin: -7px 0 0 11px; font-size: 14px; color: #e8e8e8; letter-spacing: 0; }
.stack > div { display: flex; align-items: center; gap: 4px; height: 32.5px; white-space: nowrap; }
.stack svg { width: 20px; height: 20px; }
.collapse { position: absolute; right: 11px; bottom: 14px; width: 12px; height: 8px; transform: scaleY(-1); }
.fx { font: italic 22px "Liberation Serif", serif; fill: #cfcfcf; }

/* body */
.body { flex: 1; display: flex; min-height: 0; }
.rail { width: 51px; border-right: 1px solid #333; }
.rail > div { height: 50px; padding: 12px 0 0 14px; }
.rail .sel { border-left: 4px solid #2aac94; padding-left: 9px; }
.rail svg { width: 23px; height: 23px; overflow: visible; }
.dax { font: 700 9px "Open Sans", sans-serif; fill: #e8e8e8; }
.center { width: 1417px; display: flex; flex-direction: column; }
.work { height: 793px; display: flex; background: #fff; }
.canvas { width: 1166px; background: #fff; padding: 21px 0 0 61px; }
.visual { position: relative; width: 1060px; height: 593px; border: 2px solid #6f6f6f; }
.visual svg { margin: -1px; overflow: visible; }
.h { position: absolute; background: #8a8a8a; }
.tl, .tr, .bl2, .br { width: 11px; height: 11px; background: none; border: 0 solid #8a8a8a; }
.tl { left: -3px; top: -3px; border-width: 5px 0 0 5px; }
.tr { right: -3px; top: -3px; border-width: 5px 5px 0 0; }
.bl2 { left: -3px; bottom: -3px; border-width: 0 0 5px 5px; }
.br { right: -3px; bottom: -3px; border-width: 0 5px 5px 0; }
.tc, .bc { width: 15px; height: 5px; left: 521px; } .tc { top: -3px; } .bc { bottom: -3px; }
.ml, .mr { width: 5px; height: 15px; top: 287px; } .ml { left: -3px; } .mr { right: -3px; }
.vtitle { font: 400 15px Roboto, sans-serif; fill: #252423; }
.lab { font: 11px "Open Sans", sans-serif; fill: #605e5c; }
.lead { fill: none; stroke: #a6a6a6; stroke-width: 1; }
.leg { font: 11.500px "Open Sans", sans-serif; fill: #605e5c; }
.leg.head { font-weight: 700; }
.vtools { height: 42px; padding: 4px 0 0 769px; }
.vtools svg { width: 290px; height: 24px; }
.pagebreak { margin-left: -61px; height: 2px; background: repeating-linear-gradient(90deg, #555 0 2px, transparent 2px 4px); margin-top: -1px; }

/* filters */
.filters { width: 251px; border-left: 1px solid #b3b0ad; color: #252423; background: #fff; position: relative; }
.fhead { display: flex; height: 57px; padding: 18px 0 0 17px; }
.fhead .fi { width: 16px; height: 13px; margin-right: 12px; }
.fhead h2 { font-size: 18px; line-height: 24px; width: 54px; font-weight: 600; margin: -6px 0 0 1px; letter-spacing: -.1px; }
.fhead .ey { width: 12px; height: 9px; margin: 0 27px 0 86px; }
.fhead .dc { width: 10px; height: 11px; margin-top: -1px; }
.fsearch { width: 225px; height: 38px; margin-left: 10px; border: 1px solid #a6a4a2; border-radius: 2px; display: flex; align-items: center; padding: 0 0 2px 15px; gap: 19px; font-size: 15.500px; }
.fsearch svg { width: 15px; height: 15px; }
.flist { margin-top: 5px; border-top: 1px solid #a6a4a2; height: 692px; padding: 10px 0 0 10px; overflow: hidden; position: relative; font-size: 14px; }
.fcard { position: relative; width: 230px; height: 57px; border: 1px solid #c8c6c4; border-radius: 2px; margin-bottom: 7.500px; padding: 5px 0 0 10px; line-height: 22.500px; letter-spacing: .12px; }
.fcard.cut { height: 30px; border-top: 0; padding-top: 0; margin-bottom: 7px; }
.c1, .c2, .c3 { position: absolute; color: #555; }
.c1 { right: 42px; top: 12px; width: 11px; height: 8px; }
.c2 { right: 14px; top: 8px; width: 12px; height: 14px; }
.c3 { right: 14px; top: 35px; width: 12px; height: 9px; }
.drop { width: 230px; height: 57px; border: 1px solid #3b3a39; border-radius: 2px; text-align: center; line-height: 55px; }
.fcard + .drop { margin-top: 8px; }
.flabel { display: flex; justify-content: space-between; width: 223px; height: 64.500px; padding-top: 33px; line-height: 20px; letter-spacing: .1px; }
.fscroll { position: absolute; right: 1px; top: 360px; width: 7px; height: 332px; background: #d6d6d6; border-radius: 4px; }

/* page tabs */
.tabs { height: 44px; background: #292929; display: flex; }
.views { width: 160px; border-right: 1px solid #777; display: flex; padding-left: 13px; }
.dv { width: 30px; height: 39px; border-bottom: 4px solid #2aac94; padding: 8px 0 0 5px; }
.dv svg { width: 20px; height: 20px; }
.ph { width: 14px; height: 24px; margin: 6px 27px 0 33px; }
.ar { width: 8px; height: 12px; margin-top: 15px; } .ar.r { margin-left: 19px; }
.tab { width: 97px; text-align: center; line-height: 45px; font-size: 14.500px; letter-spacing: -.1px; color: #eee; border-right: 1px solid #555; }
.tab.cur { width: 93px; font-weight: 700; letter-spacing: -.6px; color: #fff; border-bottom: 5px solid #2aac94; }
.add { width: 49px; background: #2aac94; display: flex; justify-content: center; padding-top: 13px; }
.add svg { width: 14px; height: 14px; }

/* visualizations */
.viz { width: 227px; border-left: 1px solid #6e6e6e; border-right: 1px solid #6e6e6e; color: #fff; display: flex; flex-direction: column; }
.vhead { height: 45px; padding: 13px 13px 0 10px; display: flex; justify-content: space-between; }
.vhead h2 { font-size: 18.500px; line-height: 24px; font-weight: 700; letter-spacing: -.4px; }
.vhead svg { width: 10px; height: 12px; margin-top: 5px; }
.viz h3 { font-size: 14px; line-height: 26px; font-weight: 700; letter-spacing: -.3px; padding-left: 10px; }
.vtabs { display: flex; gap: 44px; padding: 1px 0 0 10px; }
.vt { width: 40px; height: 40px; border-radius: 3px; }
.vt:last-child { margin-left: -4px; }
.vt.on { background: #292929; }
.vline { height: 13px; margin-top: 6px; flex: none; }
.vline svg { width: 226px; height: 11px; margin-left: -1px; }
.vgrid { display: grid; grid-template-columns: repeat(6, 35px); grid-auto-rows: 35px; padding: 10px 0 0 14px; height: 289px; border-bottom: 1px solid #e0e0e0; flex: none; }
.vgrid svg { width: 23px; height: 23px; overflow: visible; }
.vgrid .picked { width: 31px; height: 31px; margin: -4px; border: 1px solid #fff; padding: 3px; }
.n123 { font: 10px "Open Sans", sans-serif; fill: #4a9ddb; } .n123.s { font-size: 9px; }
.big { font: 500 19px "Open Sans", sans-serif; fill: #3f9be0; }
.wells { height: 406px; overflow: hidden; position: relative; font-size: 14px; }
.wname { padding: 9px 0 0 15px; height: 38px; line-height: 26px; font-size: 14px; }
.well { width: 214px; margin-left: 5px; height: 420px; border: 1px dashed #777; padding: 4px 4px 4px 3px; display: flex; flex-direction: column; gap: 2.300px; }
.pill { height: 28px; flex: none; border: 1px solid #6e6e6e; border-radius: 2px; background: #1f1f1f; display: flex; align-items: center; padding: 0 6px 0 5px; letter-spacing: -.05px; }
.pill span, .sub span { flex: 1; }
.pill .c { width: 12px; height: 8px; margin-right: 10px; }
.x { width: 9px; height: 9px; }
.multi { border: 1px solid #6e6e6e; border-radius: 2px; background: #1f1f1f; height: 122px; flex: none; }
.multi .pill { border: 0; background: none; padding: 0 6px 0 5px; height: 27px; }
.sub { display: flex; align-items: center; height: 23.600px; padding: 0 6px 0 15px; }
.vscroll { position: absolute; right: 0; top: 3px; width: 7px; height: 195px; border-radius: 4px; background: #666; }

/* data */
.data { width: 225px; color: #fff; font-size: 14px; }
.data .vhead { height: 57px; }
.dsearch { width: 215px; height: 30px; margin: 0 0 11px 5px; border: 1px solid #8a8a8a; border-radius: 4px; background: #242424; display: flex; align-items: center; padding-left: 15px; gap: 9px; font-size: 16px; color: #a0a0a0; }
.dsearch svg { width: 18px; height: 18px; color: #ccc; }
.table { display: flex; height: 30px; align-items: center; padding-left: 18px; }
.table .c { width: 12px; height: 8px; margin-right: 5px; }
.table .t { width: 24px; height: 24px; margin-top: 6px; }
.row { display: flex; height: 30px; align-items: center; padding-left: 55px; }
.row .k { width: 15px; height: 15px; }
.row i { width: 32px; padding-left: 11px; }
.row .s { width: 14px; height: 16px; }
.row .t { width: 24px; height: 24px; margin: 6px 0 0 -2px; }
.row.exp { padding-left: 39px; } .row .e { width: 8px; height: 12px; margin-right: 8px; }
.row span { letter-spacing: 0; } .table span { letter-spacing: -.1px; }

/* status */
.status { height: 30px; flex: none; border-top: 1px solid #777; border-bottom: 1px solid #000; display: flex; align-items: center; padding-left: 5px; }
.status .pg { flex: 1; font-size: 14.300px; color: #c8c8c8; }
.status svg { width: 160px; height: 16px; margin-right: 12px; }
.pc { width: 52px; letter-spacing: -.1px; }
.status .fit { width: 20px; height: 14px; margin-right: 22px; }
```
FILE: chart.js
```js
const NS = 'http://www.w3.org/2000/svg';
const CX = 511.3, CY = 304.2, R = 215.8;

function add(parent, tag, attrs, text) {
  const el = document.createElementNS(NS, tag);
  for (const k in attrs) el.setAttribute(k, attrs[k]);
  if (text !== undefined) el.textContent = text;
  parent.appendChild(el);
}
function at(deg, r) {
  const a = deg * Math.PI / 180;
  return [CX + r * Math.sin(a), CY - r * Math.cos(a)];
}

// [end angle, colour, repeating slice widths in degrees]
const bands = [
  [38.3, '#12239e', [38.3]], [45.7, '#12239e', [7.4]], [67, '#12239e', [21.3]], [72.8, '#12239e', [5.8]],
  [83.8, '#12239e', [2.4, .22, .22, 2.2, .24, .4]], [88.5, '#12239e', [1.9, .25, .3]], [91.6, '#12239e', [.6, .3, .5, .25]],
  [107.6, '#12239e', [16]], [111.3, '#12239e', [3.7]], [117.2, '#12239e', [.6, .35, .35, .28]],
  [129.4, '#12239e', [12.2]], [131.3, '#12239e', [1.9]], [132.5, '#12239e', [.13]],
  [141, '#12239e', [8.5]], [142.1, '#12239e', [1.1]],
  [146.8, '#e66c37', [4.1, .6]], [151.6, '#e66c37', [4, .4, .4]], [160, '#e66c37', [3.6, .3, .35]],
  [171, '#e66c37', [2.9, .4, .3]], [184, '#e66c37', [1.5, .35, 1.1, .3]],
  [192, '#e66c37', [.95, .26, .4, .7, .24]], [197.2, '#e66c37', [.45, .24, .24, .4]],
  [203, '#e66c37', [5.8]], [204.1, '#e66c37', [1.1]],
  [206, '#6b007b', [.14]], [208, '#e044a7', [.13]], [210, '#e044a7', [.15]], [212.4, '#744ec2', [.12]],
  [214.6, '#d9b300', [.14]], [216, '#d64550', [.12]], [217.5, '#1aab40', [.12]], [220.4, '#15c6f4', [.13]],
  [223.1, '#be5dc9', [2.7]], [232.7, '#be5dc9', [.4, 3.8, .35, 1.4]], [246, '#be5dc9', [2.6, .3, 2, .35]],
  [260.5, '#be5dc9', [2, .3, 1.5, .3]], [276, '#be5dc9', [1, .28, .4, .6, .26]],
  [276.8, '#ff9f59', [.14]], [278.3, '#00ddbc', [.3, .15]],
  [300, '#00ddbc', [1.7, .28, 1.3, .27]], [314.5, '#00ddbc', [1.1, .28, .7, .3]], [316.6, '#00ddbc', [.18]],
  [322, '#0092d9', [.28, .5, .27, .34]], [331.5, '#0092d9', [1, .34, .6]], [335, '#0092d9', [.4, .24, .5]],
  [336.7, '#0092d9', [.12]], [342, '#3d68cb', [.36, .23, .27, .3]], [346.5, '#3d68cb', [.75, .34, .3]],
  [349.5, '#ff6a00', [.2]], [351.2, '#ff6a00', [.4, .23]], [356.5, '#f050c0', [.17]], [360, '#4c4c9c', [.17]]
];
const slices = document.getElementById('slices');
let a = 0;
for (const [end, color, widths] of bands) {
  for (let i = 0; a < end - .02; i++) {
    const b = Math.min(end, a + widths[i % widths.length]);
    const [x0, y0] = at(a, R), [x1, y1] = at(b, R);
    add(slices, 'path', {
      d: `M${CX} ${CY}L${x0.toFixed(2)} ${y0.toFixed(2)}A${R} ${R} 0 0 1 ${x1.toFixed(2)} ${y1.toFixed(2)}Z`,
      fill: color, stroke: '#fff', 'stroke-width': a < 142 ? .9 : .68
    });
    a = b;
  }
}

const labels = [
  [19.15, '4M (10.64%)'], [42.1, '1M (2.06%)'], [56.5, '2M (5.91%)'], [70, '1M (1.6%)'], [74.2, '0M (0.67%)'],
  [78.3, '0M (0.13%)'], [82.5, '0M (0.57%)'], [86.2, '0M (0.13%)'], [89.6, '0M (0.21%)'], [99.6, '1M (4.45%)'],
  [109.4, '0M (1.03%)'], [113.2, '0M (0.16%)'], [117.1, '0M (0.04%)'], [123.3, '1M (3.41%)'], [130.4, '0M (0.56%)'],
  [136.7, '1M (2.34%)'], [142.2, '0M (0.02%)'], [149.3, '0M (1.1%)'], [158.2, '0M (0.82%)'], [171.6, '0M (0.63%)'],
  [180.4, '0M (0.54%)'], [193.3, '0M (0.05%)'], [204.2, '0M (0.04%)'], [211.5, '0M (0.01%)'], [217.7, '0M (0.03%)'],
  [225.5, '0M (1.06%)'], [232.8, '0M (0.04%)'], [240.3, '0M (0.59%)'], [246.9, '0M (0.56%)'], [252.3, '0M (0.56%)'],
  [256.8, '0M (0.47%)'], [260.7, '0M (0.26%)'], [264.1, '0M (0.04%)'], [267.6, '0M (0.04%)'], [271.2, '0M (0.03%)'],
  [274.8, '0M (0.04%)'], [278.9, '0M (0.4%)'], [282.5, '0M (0.07%)'], [286.2, '0M (0.3%)'], [290.1, '0M (0.46%)'],
  [294, '0M (0.45%)'], [298.1, '0M (0.04%)'], [302.3, '0M (0.31%)'], [306.7, '0M (0.24%)'], [311.4, '0M (0.25%)'],
  [316.6, '0M (0.18%)'], [322.8, '0M (0.25%)'], [329.8, '0M (0.3%)'], [339, '0M (0.15%)'],
  [347.8, '0M', '(0.02%)'], [356.4, '0M', '(0.01%)']
];
const lg = document.getElementById('labels');
for (const [deg, t1, t2] of labels) {
  const side = deg < 180 ? 1 : -1;
  const [x0, y0] = at(deg, 221), [x1, y1] = at(deg, 242.5);
  const x2 = x1 + side * 11;
  add(lg, 'path', { class: 'lead', d: `M${x0} ${y0}L${x1} ${y1}H${x2}` });
  const base = { class: 'lab', x: x2 + side * 4, 'text-anchor': side > 0 ? 'start' : 'end', lengthAdjust: 'spacingAndGlyphs' };
  if (t2) {
    add(lg, 'text', { ...base, y: y1 - 2, textLength: 15.5 }, t1);
    add(lg, 'text', { ...base, y: y1 + 13, textLength: 35 }, t2);
  } else {
    add(lg, 'text', { ...base, y: y1 + 4.5, textLength: 54.5 + 6 * (t1.length - 10) }, t1);
  }
}

const legend = [['-', '#118dff'], ['0', '#12239e'], ['1', '#e66c37'], ['10', '#6b007b'], ['11', '#e044a7'],
  ['12', '#744ec2'], ['13', '#d9b300'], ['14', '#d64550'], ['15', '#197278'], ['16', '#1aab40'], ['17', '#15c6f4'],
  ['18', '#4092ff'], ['19', '#ffa058'], ['2', '#be5dc9'], ['20', '#f472d0'], ['21', '#b5a1ff'], ['22', '#c4a200'],
  ['24', '#ff8080'], ['3', '#00dbbc'], ['33', '#5bd667'], ['4', '#0091d5'], ['5', '#4668c5'], ['6', '#ff6300']];
const le = document.getElementById('legend');
add(le, 'text', { class: 'leg head', x: 1020, y: 33.5 }, '4s');
legend.forEach(([name, color], i) => {
  const y = 49 + i * 23.09;
  add(le, 'circle', { cx: 1024.7, cy: y, r: 4.7, fill: color });
  add(le, 'text', { class: 'leg', x: 1032, y: y + 4.5 }, name);
});
```
